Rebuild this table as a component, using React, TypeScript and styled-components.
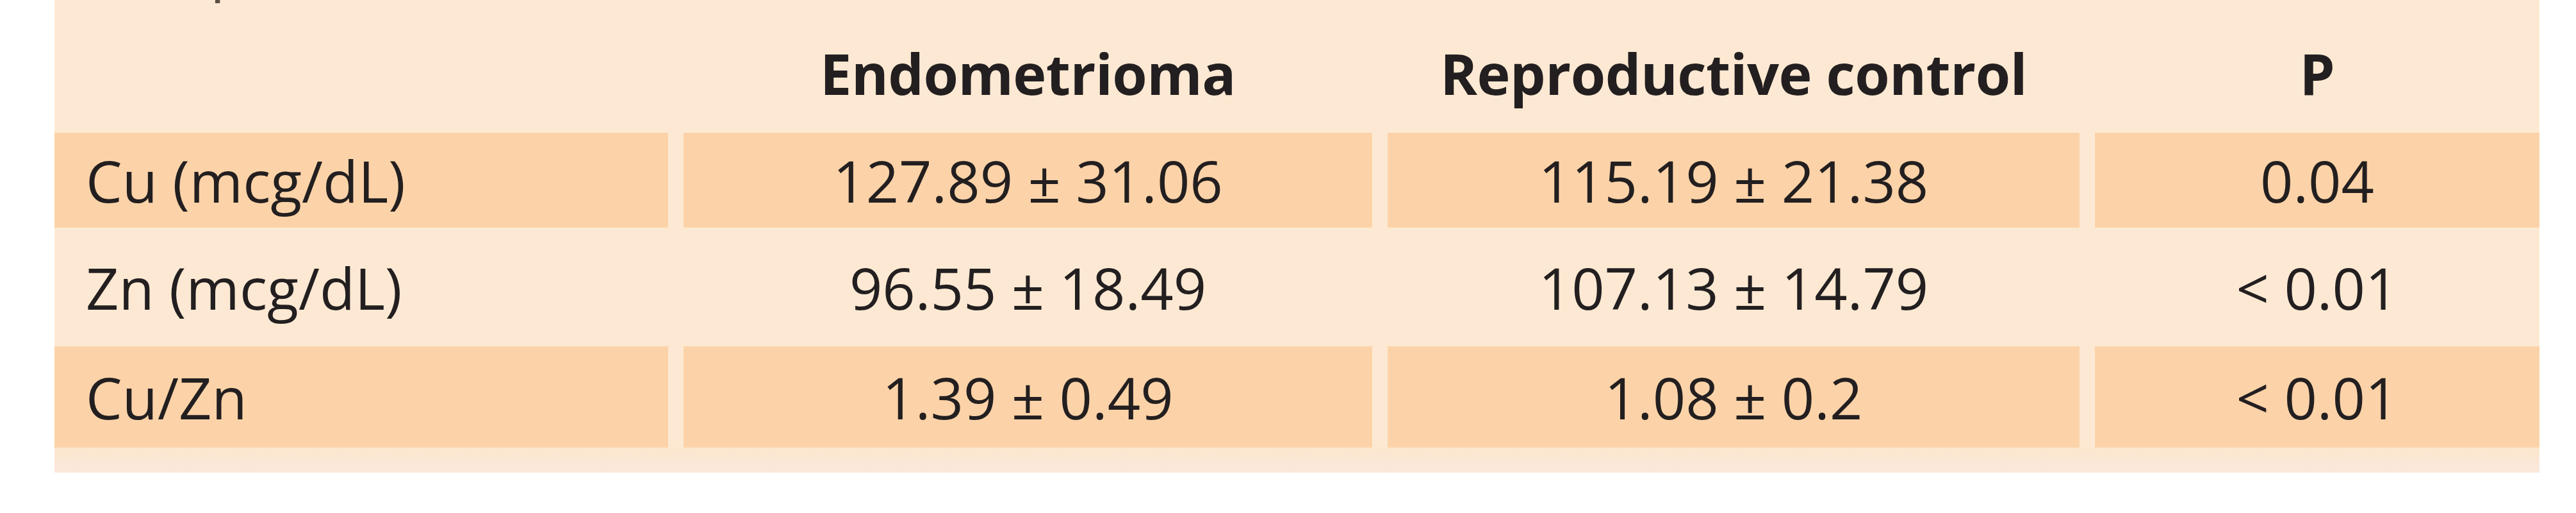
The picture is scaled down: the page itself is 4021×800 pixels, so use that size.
import styled, { createGlobalStyle } from "styled-components";

type Row = {
  label: string;
  endo: string;
  ctrl: string;
  p: string;
  height: number;
  shaded: boolean;
};

const rows: Row[] = [
  { label: "Cu (mcg/dL)", endo: "127.89 ± 31.06", ctrl: "115.19 ± 21.38", p: "0.04", height: 148, shaded: true },
  { label: "Zn (mcg/dL)", endo: "96.55 ± 18.49", ctrl: "107.13 ± 14.79", p: "< 0.01", height: 185, shaded: false },
  { label: "Cu/Zn", endo: "1.39 ± 0.49", ctrl: "1.08 ± 0.2", p: "< 0.01", height: 158, shaded: true },
];

const App: React.FC = () => {
  return (
    <>
      <GlobalStyle />
      <Panel>
        <Caption>Comparison of the serum levels (Cu)</Caption>
        <TableRow $h={204}>
          <HeadCell />
          <HeadCell>Endometrioma</HeadCell>
          <HeadCell>Reproductive control</HeadCell>
          <HeadCell>P</HeadCell>
        </TableRow>
        {rows.map((row) => (
          <TableRow key={row.label} $h={row.height}>
            <Cell $shaded={row.shaded} $left>
              {row.label}
            </Cell>
            <Cell $shaded={row.shaded}>{row.endo}</Cell>
            <Cell $shaded={row.shaded}>{row.ctrl}</Cell>
            <Cell $shaded={row.shaded}>{row.p}</Cell>
          </TableRow>
        ))}
        <BottomStrip />
      </Panel>
    </>
  );
};

export default App;

const GlobalStyle = createGlobalStyle`
  html, body {
    margin: 0;
    padding: 0;
    background: #ffffff;
  }
  body {
    width: 4021px;
    height: 800px;
    overflow: hidden;
    font-family: "Open Sans", "Noto Sans", sans-serif;
    color: #231f20;
  }
`;

const Panel = styled.div`
  margin-left: 85px;
  margin-top: -107px;
  width: 3879px;
  background-color: #fde9d3;
  display: flex;
  flex-direction: column;
`;

const Caption = styled.div`
  height: 110px;
  line-height: 110px;
  padding-left: 49px;
  font-size: 90px;
  color: #5a4e46;
  white-space: nowrap;
`;

const TableRow = styled.div<{ $h: number }>`
  display: grid;
  grid-template-columns: 958px 1075px 1080px 694px;
  column-gap: 24px;
  height: ${(props) => props.$h}px;
`;

const HeadCell = styled.div`
  display: flex;
  align-items: center;
  justify-content: center;
  padding-top: 18px;
  font-size: 88px;
  font-weight: 700;
  letter-spacing: -0.5px;
  white-space: nowrap;
`;

const Cell = styled.div<{ $shaded: boolean; $left?: boolean }>`
  display: flex;
  align-items: center;
  justify-content: ${(props) => (props.$left ? "flex-start" : "center")};
  padding-left: ${(props) => (props.$left ? "49px" : "0")};
  background-color: ${(props) => (props.$shaded ? "#fcd3a8" : "transparent")};
  font-size: 90px;
  font-weight: 400;
  white-space: nowrap;
`;

const BottomStrip = styled.div`
  height: 39px;
  background: linear-gradient(#fce6cf, #fbe8dc);
`;
